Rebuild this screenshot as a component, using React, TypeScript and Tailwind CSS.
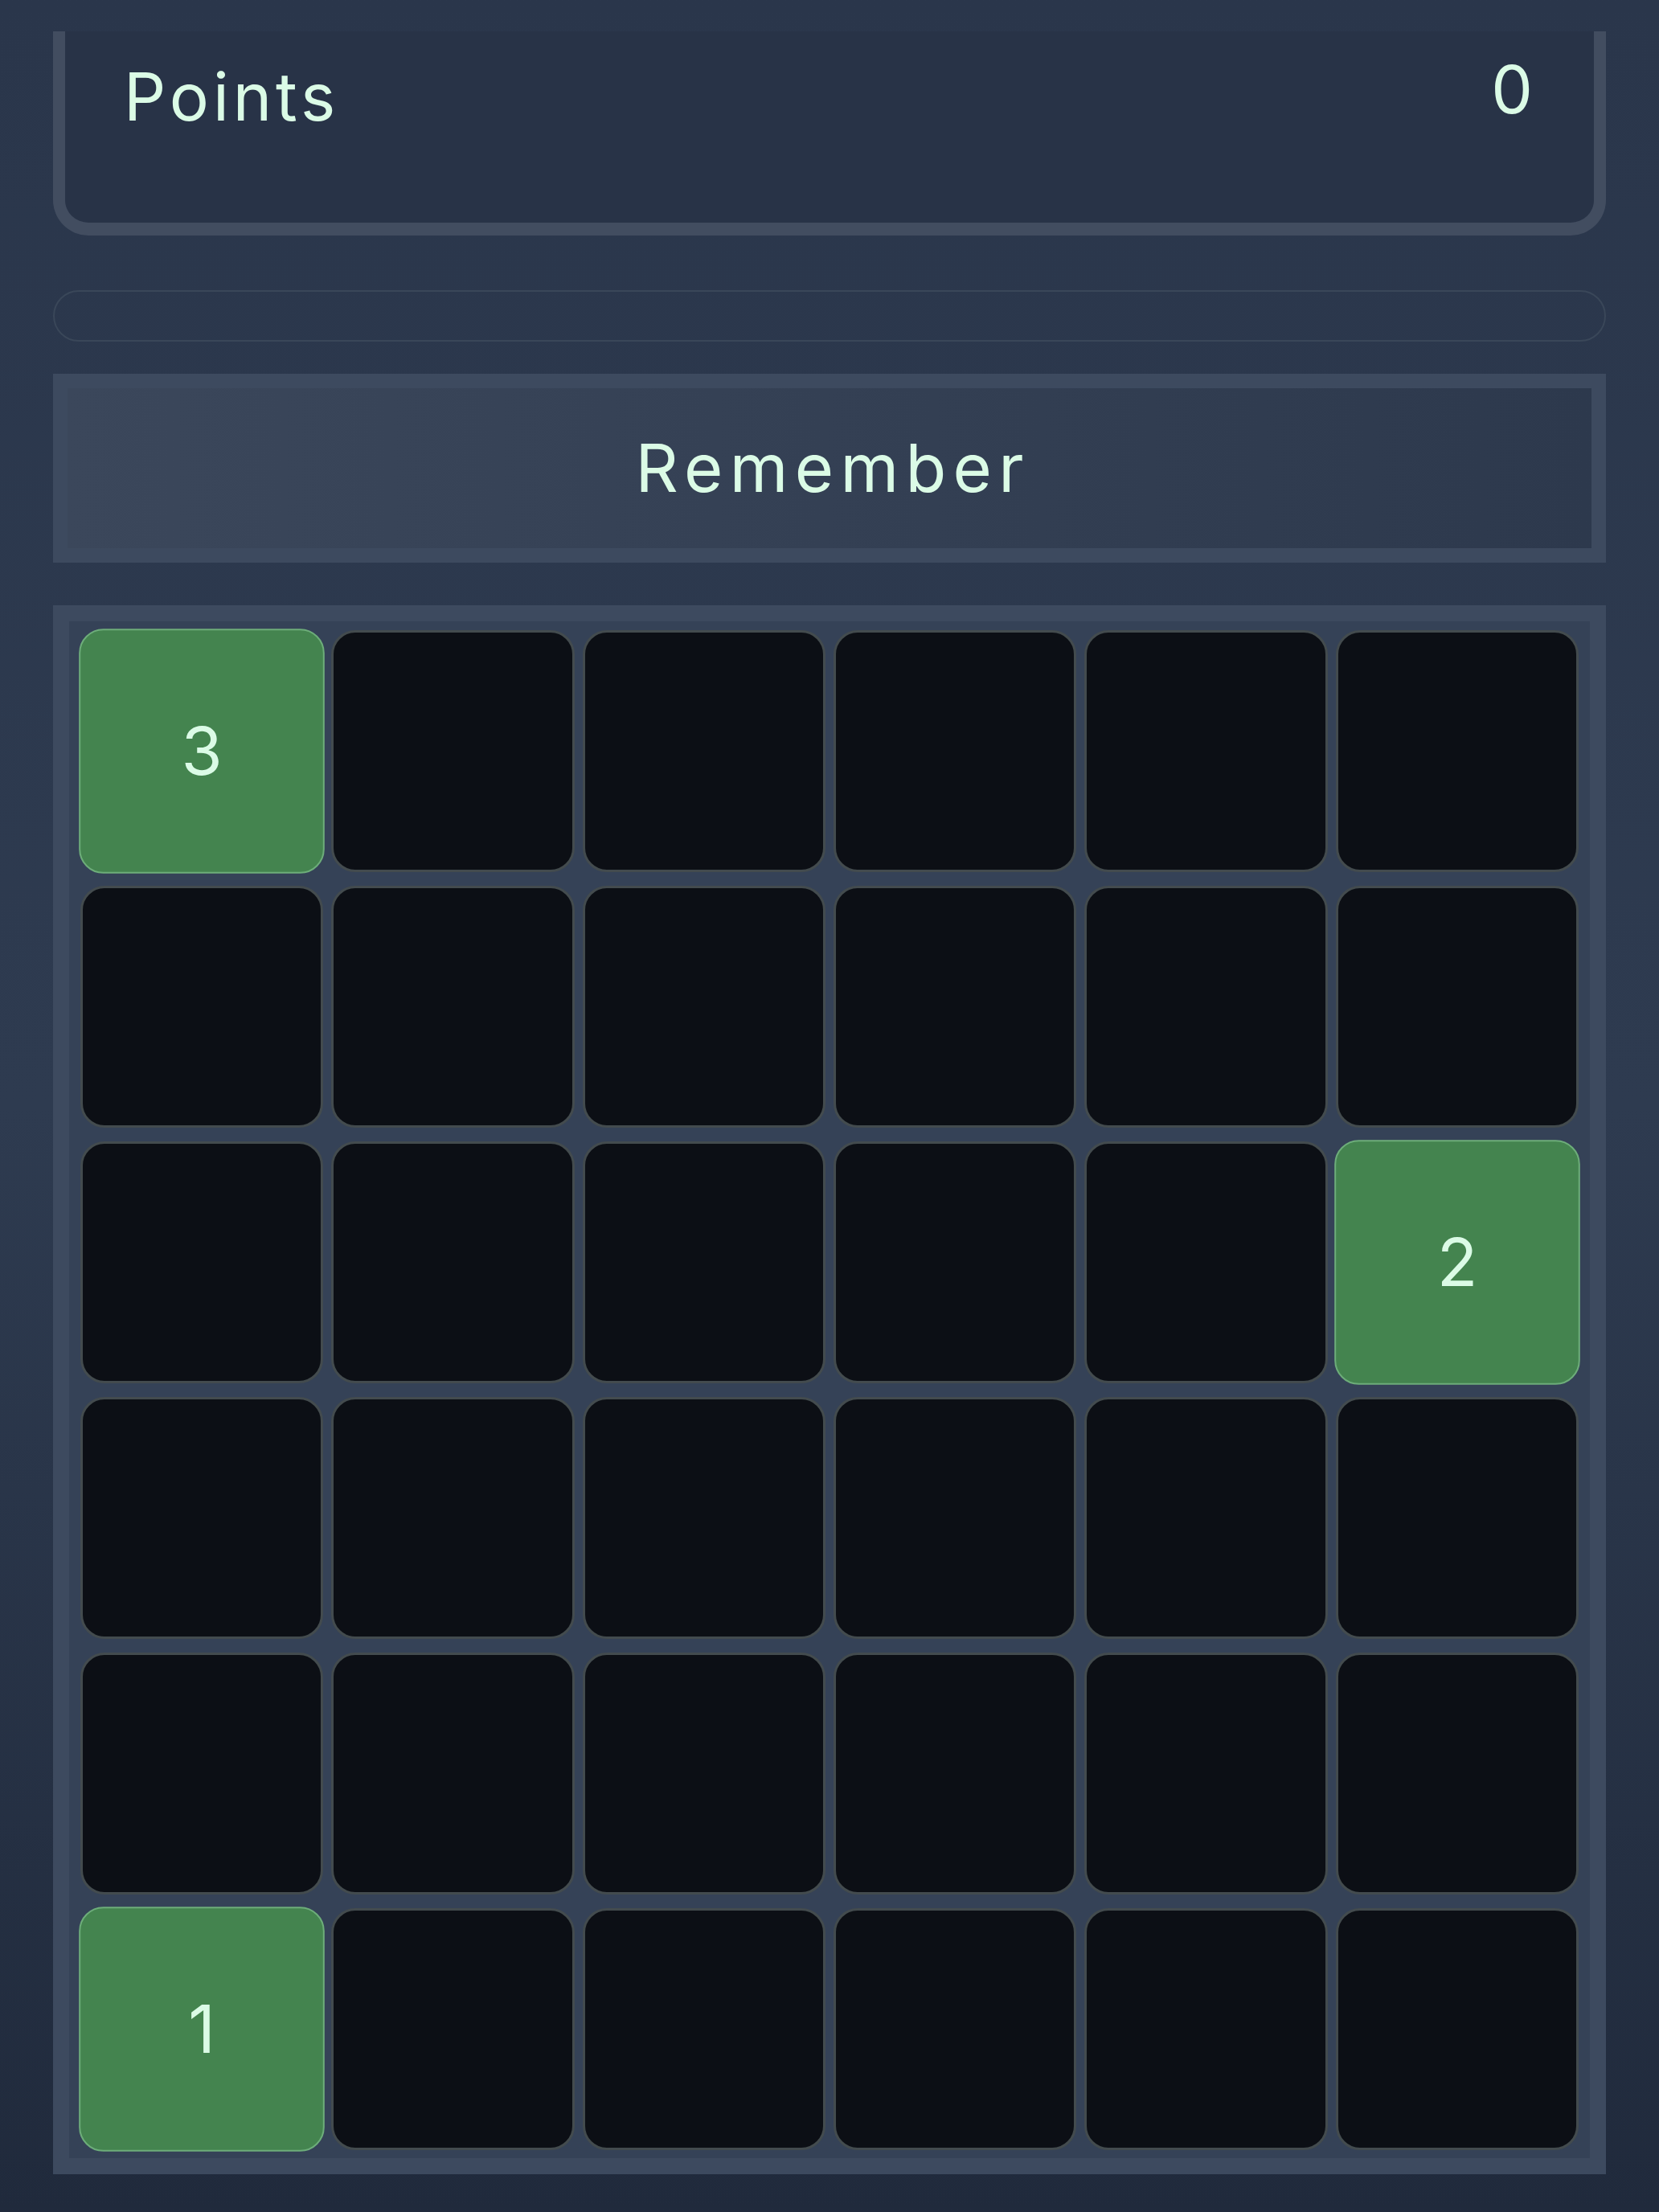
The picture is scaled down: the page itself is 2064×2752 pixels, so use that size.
import React from "react";

const font = { fontFamily: "Inter, 'DejaVu Sans', sans-serif" };

// numbered tiles: index -> label
const lit: Record<number, string> = { 0: "3", 17: "2", 30: "1" };

function Tile({ label }: { label?: string }) {
  if (label) {
    return (
      <div className="h-[301px] rounded-[30px] border-2 border-[#6dad7a] bg-[#44844f] scale-[1.012] flex items-center justify-center text-[82px] leading-none text-[#dbfbe6]">
        {label}
      </div>
    );
  }
  return <div className="h-[301px] rounded-[30px] border-[3px] border-[#434b4e] bg-[#0c0f15]" />;
}

export default function App() {
  return (
    <div
      style={font}
      className="min-h-screen w-full bg-gradient-to-b from-[#2a364b] via-[#2e3b50] to-[#202a3c] px-[66px] pt-[39px] text-[#dbfbe6]"
    >
      {/* score card */}
      <div className="h-[254px] rounded-b-[44px] border-x-[15px] border-b-[16px] border-[#424d60] bg-[#283347] pl-[73px] pr-[76px] pt-[41px]">
        <div className="flex items-start justify-between text-[82px] leading-none">
          <span className="tracking-[0.06em]">Points</span>
          <span className="-mt-[9px]">0</span>
        </div>
      </div>

      {/* timer bar */}
      <div className="mt-[68px] h-[64px] rounded-full border-2 border-[#3a4759]" />

      {/* phase button */}
      <div className="mt-[40px] h-[235px] border-[18px] border-[#3d4a5f] bg-gradient-to-r from-[#3b475b] to-[#2d394d] flex items-center justify-center text-[83px] leading-none tracking-[0.1em]">
        <span className="pl-[0.1em]">Remember</span>
      </div>

      {/* board */}
      <div className="mt-[53px] border-[20px] border-[#3d4a5f] bg-[#354257] px-[14px] pt-[11px] pb-[10px]">
        <div className="grid grid-cols-6 gap-x-[10px] gap-y-[17px]">
          {Array.from({ length: 36 }, (_, i) => (
            <Tile key={i} label={lit[i]} />
          ))}
        </div>
      </div>
    </div>
  );
}
